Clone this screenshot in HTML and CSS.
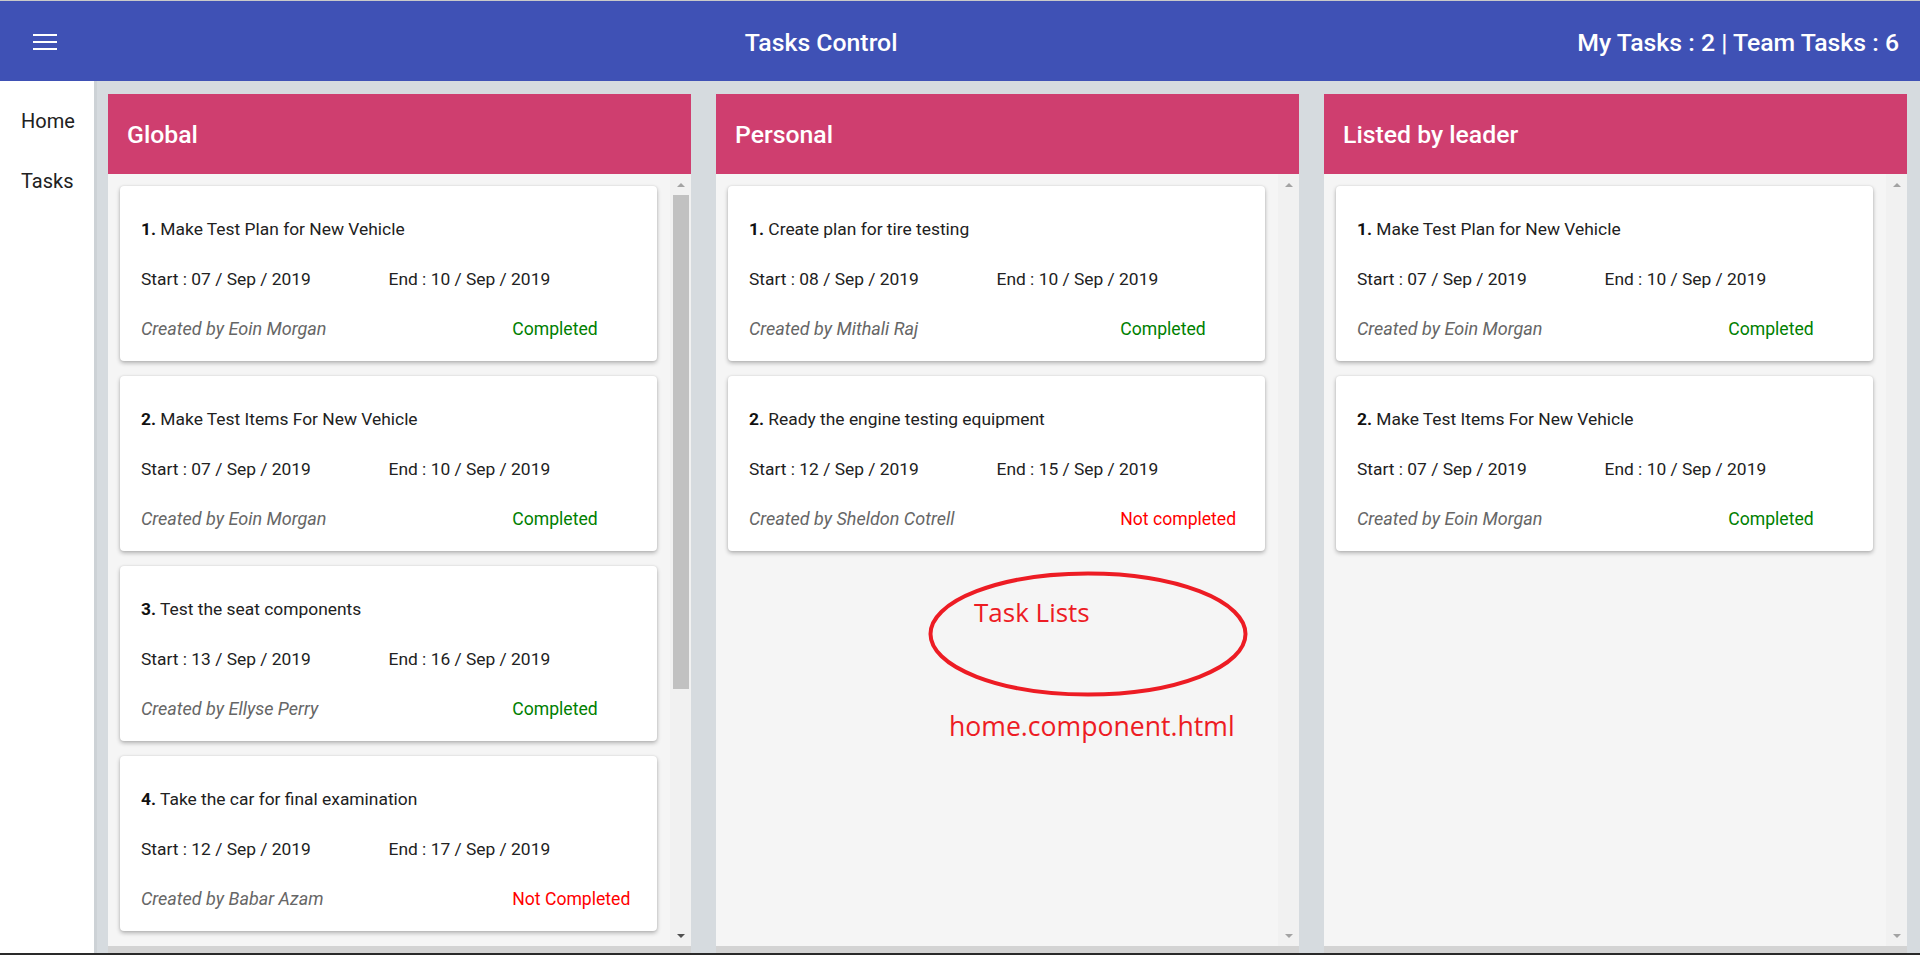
FILE: index.html
```html
<!DOCTYPE html>
<html lang="en">
<head>
<meta charset="utf-8">
<title>Tasks Control</title>
<link rel="stylesheet" href="styles.css">
</head>
<body>
<div class="topline"></div>
<header class="toolbar">
  <button class="menu-btn" aria-label="Menu">
    <svg width="24" height="16" viewBox="0 0 24 16"><rect x="0" y="0" width="24" height="2" fill="#fff"/><rect x="0" y="7" width="24" height="2" fill="#fff"/><rect x="0" y="14" width="24" height="2" fill="#fff"/></svg>
  </button>
  <span class="spacer"></span>
  <span class="app-title">Tasks Control</span>
  <span class="spacer"></span>
  <span class="counts">My Tasks : 2 | Team Tasks : 6</span>
</header>
<div class="layout">
  <nav class="sidenav">
    <a class="nav-link">Home</a>
    <a class="nav-link">Tasks</a>
  </nav>
  <main class="board">
    <section class="panel">
      <h2 class="panel-title">Global</h2>
      <div class="panel-body">
        <div class="list">
          <div class="card">
            <div class="card-title"><b>1.</b> Make Test Plan for New Vehicle</div>
            <div class="row"><span class="half">Start : 07 / Sep / 2019</span><span class="half">End : 10 / Sep / 2019</span></div>
            <div class="row"><span class="created">Created by Eoin Morgan</span><span class="status done">Completed</span></div>
          </div>
          <div class="card">
            <div class="card-title"><b>2.</b> Make Test Items For New Vehicle</div>
            <div class="row"><span class="half">Start : 07 / Sep / 2019</span><span class="half">End : 10 / Sep / 2019</span></div>
            <div class="row"><span class="created">Created by Eoin Morgan</span><span class="status done">Completed</span></div>
          </div>
          <div class="card">
            <div class="card-title"><b>3.</b> Test the seat components</div>
            <div class="row"><span class="half">Start : 13 / Sep / 2019</span><span class="half">End : 16 / Sep / 2019</span></div>
            <div class="row"><span class="created">Created by Ellyse Perry</span><span class="status done">Completed</span></div>
          </div>
          <div class="card">
            <div class="card-title"><b>4.</b> Take the car for final examination</div>
            <div class="row"><span class="half">Start : 12 / Sep / 2019</span><span class="half">End : 17 / Sep / 2019</span></div>
            <div class="row"><span class="created">Created by Babar Azam</span><span class="status todo">Not Completed</span></div>
          </div>
        </div>
        <div class="vscroll">
          <span class="sb-btn"><span class="arrow-up"></span></span>
          <span class="sb-track"><span class="sb-thumb" style="height: 494px"></span></span>
          <span class="sb-btn"><span class="arrow-down active"></span></span>
        </div>
      </div>
      <div class="panel-foot"></div>
    </section>
    <section class="panel">
      <h2 class="panel-title">Personal</h2>
      <div class="panel-body">
        <div class="list">
          <div class="card">
            <div class="card-title"><b>1.</b> Create plan for tire testing</div>
            <div class="row"><span class="half">Start : 08 / Sep / 2019</span><span class="half">End : 10 / Sep / 2019</span></div>
            <div class="row"><span class="created">Created by Mithali Raj</span><span class="status done">Completed</span></div>
          </div>
          <div class="card">
            <div class="card-title"><b>2.</b> Ready the engine testing equipment</div>
            <div class="row"><span class="half">Start : 12 / Sep / 2019</span><span class="half">End : 15 / Sep / 2019</span></div>
            <div class="row"><span class="created">Created by Sheldon Cotrell</span><span class="status todo">Not completed</span></div>
          </div>
        </div>
        <div class="vscroll">
          <span class="sb-btn"><span class="arrow-up"></span></span>
          <span class="sb-track"></span>
          <span class="sb-btn"><span class="arrow-down"></span></span>
        </div>
      </div>
      <div class="panel-foot"></div>
      <div class="annotation">
        <svg class="anno-ellipse" width="320" height="126" viewBox="0 0 320 126"><ellipse cx="160" cy="63" rx="157.5" ry="60.5" fill="none" stroke="#ED1C24" stroke-width="4"/></svg>
        <span class="anno-label">Task Lists</span>
        <span class="anno-file">home.component.html</span>
      </div>
    </section>
    <section class="panel">
      <h2 class="panel-title">Listed by leader</h2>
      <div class="panel-body">
        <div class="list">
          <div class="card">
            <div class="card-title"><b>1.</b> Make Test Plan for New Vehicle</div>
            <div class="row"><span class="half">Start : 07 / Sep / 2019</span><span class="half">End : 10 / Sep / 2019</span></div>
            <div class="row"><span class="created">Created by Eoin Morgan</span><span class="status done">Completed</span></div>
          </div>
          <div class="card">
            <div class="card-title"><b>2.</b> Make Test Items For New Vehicle</div>
            <div class="row"><span class="half">Start : 07 / Sep / 2019</span><span class="half">End : 10 / Sep / 2019</span></div>
            <div class="row"><span class="created">Created by Eoin Morgan</span><span class="status done">Completed</span></div>
          </div>
        </div>
        <div class="vscroll">
          <span class="sb-btn"><span class="arrow-up"></span></span>
          <span class="sb-track"></span>
          <span class="sb-btn"><span class="arrow-down"></span></span>
        </div>
      </div>
      <div class="panel-foot"></div>
    </section>
  </main>
</div>
<div class="taskbar-edge"></div>
</body>
</html>
```
FILE: styles.css
```css
* { box-sizing: border-box; }

html, body {
  margin: 0;
  padding: 0;
  width: 1920px;
  height: 955px;
  overflow: hidden;
}

body {
  font-family: Roboto, "Noto Sans", sans-serif;
  color: #212121;
  background: #d6dbdf;
}

.topline {
  height: 1px;
  background: #c9c9c9;
}

.toolbar {
  height: 80px;
  background: #3f51b5;
  color: #fff;
  display: flex;
  align-items: center;
  padding: 2px 21px 0 25px;
}

.menu-btn {
  width: 40px;
  height: 40px;
  padding: 0;
  border: 0;
  background: none;
  display: flex;
  align-items: center;
  justify-content: center;
}

.menu-btn svg { display: block; }

.spacer { flex: 1 1 auto; }

.app-title,
.counts {
  font-size: 24.8px;
  font-weight: 500;
  white-space: nowrap;
}

.layout {
  height: 872px;
  display: flex;
}

.sidenav {
  width: 97px;
  flex: 0 0 97px;
  background: #fff;
  border-right: 3px solid #cdd2d6;
  padding-top: 10px;
}

.nav-link {
  display: block;
  height: 60px;
  line-height: 60px;
  padding-left: 21px;
  font-size: 20px;
  color: #212121;
}

.board {
  flex: 1 1 auto;
  background: #d6dbdf;
  padding: 13px 13px 0 11px;
  display: grid;
  grid-template-columns: repeat(3, 1fr);
  column-gap: 25px;
}

.panel {
  position: relative;
  display: flex;
  flex-direction: column;
  min-height: 0;
}

.panel-title {
  flex: 0 0 80px;
  margin: 0;
  display: flex;
  align-items: center;
  padding-left: 19px;
  background: #cf3e6f;
  color: #fff;
  font-size: 24.8px;
  font-weight: 500;
}

.panel-body {
  flex: 1 1 auto;
  min-height: 0;
  display: flex;
  background: #f5f5f5;
}

.list {
  flex: 1 1 auto;
  min-width: 0;
  overflow: hidden;
  padding: 12px 13px 12px 12px;
  display: flex;
  flex-direction: column;
  gap: 15px;
}

/* scrollbar */
.vscroll {
  flex: 0 0 21px;
  display: flex;
  flex-direction: column;
  background: #f1f1f1;
}

.sb-btn {
  flex: 0 0 21px;
  display: flex;
  align-items: center;
  justify-content: center;
}

.sb-track {
  flex: 1 1 auto;
  display: flex;
  flex-direction: column;
}

.sb-thumb {
  display: block;
  margin: 0 2px 0 3px;
  background: #c1c1c1;
}

.arrow-up {
  width: 0;
  height: 0;
  border-left: 4px solid transparent;
  border-right: 4px solid transparent;
  border-bottom: 4px solid #a3a3a3;
}

.arrow-down {
  width: 0;
  height: 0;
  border-left: 4px solid transparent;
  border-right: 4px solid transparent;
  border-top: 4px solid #a3a3a3;
}

.arrow-down.active { border-top-color: #505050; }

.panel-foot {
  flex: 0 0 7px;
  background: #d3d3d3;
}

/* cards */
.card {
  flex: 0 0 auto;
  background: #fff;
  border-radius: 4px;
  box-shadow: 0 2px 4px rgba(0, 0, 0, 0.28), 0 0 2px rgba(0, 0, 0, 0.10);
  padding: 32px 21px 21px;
  font-size: 17.4px;
  line-height: 22px;
  color: #212121;
}

.card-title b {
  font-weight: 700;
  color: #111;
}

.row {
  display: flex;
  margin-top: 28px;
  white-space: nowrap;
}

.half { flex: 0 0 50%; }

.created {
  flex: 0 0 75%;
  font-style: italic;
  font-size: 18px;
  color: #666;
}

.status {
  flex: 0 0 25%;
  font-size: 17.6px;
}
.done { color: #008000; }
.todo { color: #ff0000; }

/* annotation overlay */
.annotation {
  position: absolute;
  left: 0;
  top: 0;
  width: 100%;
  height: 100%;
  pointer-events: none;
  font-family: "Open Sans", "Noto Sans", sans-serif;
  color: #ed1c24;
  font-size: 26px;
  line-height: 36px;
}

.anno-ellipse {
  position: absolute;
  left: 212px;
  top: 477px;
}

.anno-label {
  position: absolute;
  left: 258px;
  top: 500px;
}

.anno-file {
  position: absolute;
  left: 233px;
  top: 614px;
  font-size: 26.6px;
}

.taskbar-edge {
  height: 2px;
  background: #2a2a2a;
}
```
